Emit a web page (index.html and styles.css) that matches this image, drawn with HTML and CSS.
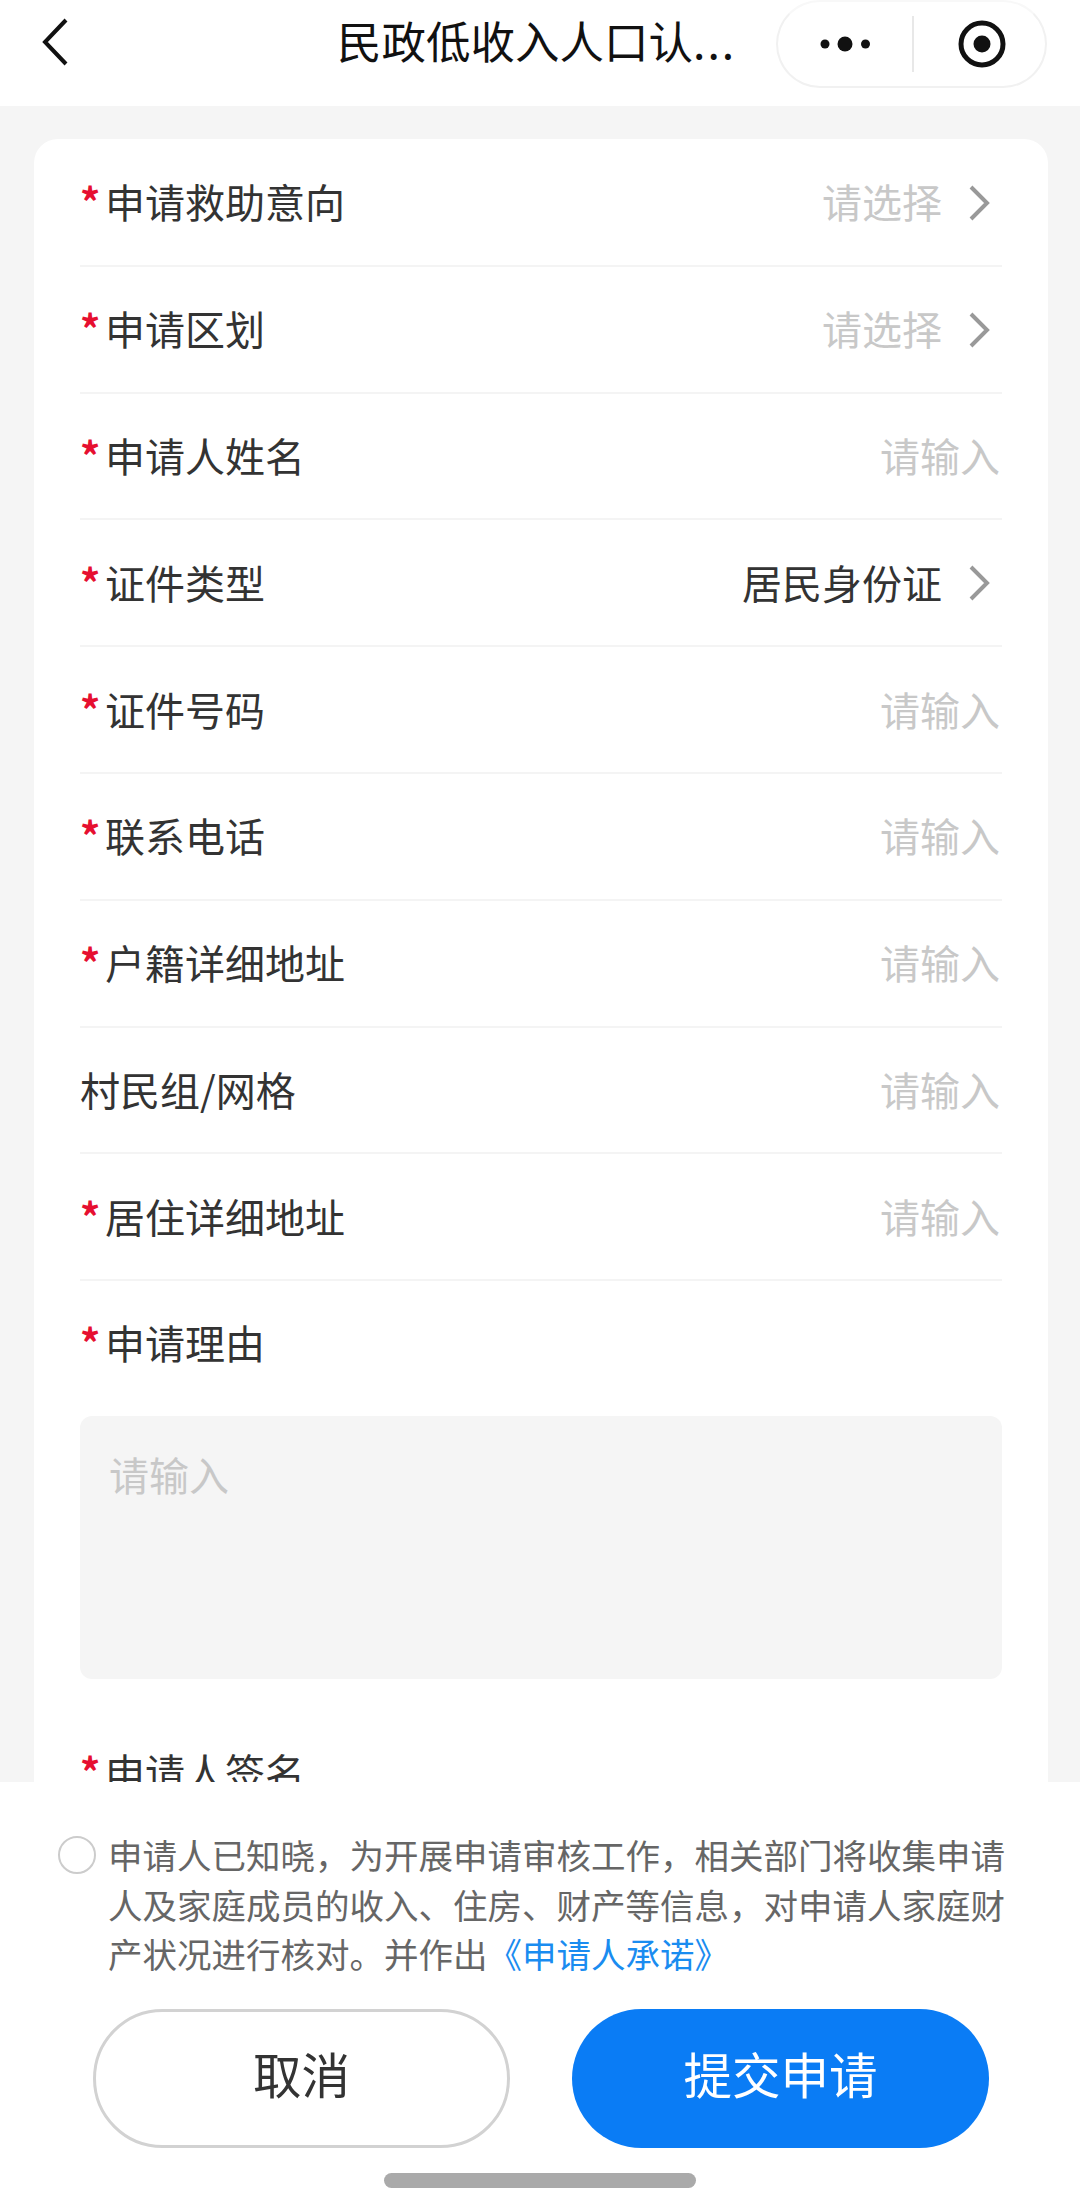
FILE: index.html
```html
<!DOCTYPE html>
<html lang="zh-CN">
<head>
    <meta charset="UTF-8">
    <meta name="viewport" content="width=device-width, initial-scale=1.0">
    <title>民政低收入人口认定申请</title>
    <link rel="stylesheet" href="styles.css">
</head>
<body>

<div class="page">
    <div class="nav">
        <svg class="nav-back" width="26" height="48" viewBox="0 0 26 48"><path d="M24 2 L3 24 L24 46" fill="none" stroke="#111" stroke-width="4"/></svg>
        <div class="nav-title">民政低收入人口认<span class="nav-dots">...</span></div>
        <div class="capsule">
            <svg class="capsule-more" width="54" height="16" viewBox="0 0 54 16"><circle cx="5" cy="8" r="4.500" fill="#111"/><circle cx="25" cy="8" r="7.500" fill="#111"/><circle cx="45.500" cy="8" r="4.500" fill="#111"/></svg>
            <div class="capsule-line"></div>
            <svg class="capsule-target" width="50" height="50" viewBox="0 0 50 50"><circle cx="25" cy="25" r="21" fill="none" stroke="#111" stroke-width="5"/><circle cx="25" cy="25" r="8.500" fill="#111"/></svg>
        </div>
    </div>

    <div class="content">
        <div class="card">
            <div class="row">
                <div class="label"><span class="star">*</span>申请救助意向</div>
                <div class="value placeholder">请选择</div>
                <svg class="arrow" width="24" height="36" viewBox="0 0 24 36"><path d="M4 2 L20 18 L4 34" fill="none" stroke="#999" stroke-width="4"/></svg>
            </div>
            <div class="row">
                <div class="label"><span class="star">*</span>申请区划</div>
                <div class="value placeholder">请选择</div>
                <svg class="arrow" width="24" height="36" viewBox="0 0 24 36"><path d="M4 2 L20 18 L4 34" fill="none" stroke="#999" stroke-width="4"/></svg>
            </div>
            <div class="row">
                <div class="label"><span class="star">*</span>申请人姓名</div>
                <div class="value placeholder">请输入</div>
            </div>
            <div class="row">
                <div class="label"><span class="star">*</span>证件类型</div>
                <div class="value">居民身份证</div>
                <svg class="arrow" width="24" height="36" viewBox="0 0 24 36"><path d="M4 2 L20 18 L4 34" fill="none" stroke="#999" stroke-width="4"/></svg>
            </div>
            <div class="row">
                <div class="label"><span class="star">*</span>证件号码</div>
                <div class="value placeholder">请输入</div>
            </div>
            <div class="row">
                <div class="label"><span class="star">*</span>联系电话</div>
                <div class="value placeholder">请输入</div>
            </div>
            <div class="row">
                <div class="label"><span class="star">*</span>户籍详细地址</div>
                <div class="value placeholder">请输入</div>
            </div>
            <div class="row">
                <div class="label">村民组/网格</div>
                <div class="value placeholder">请输入</div>
            </div>
            <div class="row">
                <div class="label"><span class="star">*</span>居住详细地址</div>
                <div class="value placeholder">请输入</div>
            </div>
            <div class="row row-plain">
                <div class="label"><span class="star">*</span>申请理由</div>
            </div>
            <div class="textarea placeholder">请输入</div>
            <div class="row row-sign">
                <div class="label"><span class="star">*</span>申请人签名</div>
            </div>
        </div>
    </div>

    <div class="footer">
        <div class="agree">
            <div class="radio"></div>
            <div class="agree-text">申请人已知晓，为开展申请审核工作，相关部门将收集申请人及家庭成员的收入、住房、财产等信息，对申请人家庭财产状况进行核对。并作出<span class="link">《申请人承诺》</span></div>
        </div>
        <div class="buttons">
            <div class="btn btn-cancel">取消</div>
            <div class="btn btn-submit">提交申请</div>
        </div>
        <div class="home-bar"></div>
    </div>
</div>

</body>
</html>
```

FILE: styles.css
```css
* {
    box-sizing: border-box;
}
body {
    margin: 0;
    font-family: "Noto Sans CJK SC", "Noto Sans", sans-serif;
    background-color: #f5f5f5;
}
.page {
    width: 1080px;
    height: 2202px;
    display: flex;
    flex-direction: column;
    overflow: hidden;
}
.nav {
    height: 106px;
    flex-shrink: 0;
    background: white;
    display: flex;
    align-items: flex-start;
    padding-left: 42px;
}
.nav-back {
    margin-top: 18px;
}
.nav-title {
    margin-left: 269px;
    width: 439px;
    font-size: 44.500px;
    line-height: 80px;
    color: #111;
    white-space: nowrap;
}
.nav-dots {
    letter-spacing: 2px;
}
.capsule {
    width: 271px;
    height: 88px;
    border: 2px solid #f1f1f1;
    border-top-color: #f8f8f8;
    border-radius: 44px;
    display: flex;
    align-items: center;
    padding-left: 42px;
}
.capsule-line {
    width: 2px;
    height: 56px;
    margin-left: 38px;
    background: #e8e8e8;
}
.capsule-target {
    margin-left: 43px;
}
.content {
    flex: 1;
    min-height: 0;
    overflow: hidden;
    padding: 33px 32px 0 34px;
}
.card {
    background: white;
    border-radius: 24px;
    padding: 1px 46px 40px;
}
.row {
    height: 126.800px;
    padding-bottom: 2px;
    display: flex;
    align-items: center;
    border-bottom: 2px solid #f4f4f4;
}
.row-plain {
    padding-bottom: 5px;
    border-bottom: none;
}
.row-sign {
    margin-top: 30px;
    border-bottom: none;
}
.label {
    flex: 1;
    font-size: 40px;
    color: #333;
    white-space: nowrap;
}
.star {
    display: inline-block;
    width: 25px;
    color: #e60f30;
    font-weight: 700;
}
.value {
    font-size: 40px;
    color: #333;
    margin-right: 2px;
}
.placeholder {
    color: #c8c8c8;
}
.arrow {
    margin-left: 23px;
    margin-right: 11px;
    margin-top: 3px;
}
.textarea {
    height: 263px;
    margin-top: 8px;
    background: #f5f5f5;
    border-radius: 12px;
    padding: 31px 29px;
    font-size: 40px;
    line-height: 54px;
}
.footer {
    height: 420px;
    flex-shrink: 0;
    position: relative;
    z-index: 1;
    background: white;
    padding-top: 48px;
}
.agree {
    display: flex;
    padding-left: 58px;
    padding-right: 70px;
}
.radio {
    width: 38px;
    height: 38px;
    flex-shrink: 0;
    margin-top: 6px;
    border: 2.500px solid #ccc;
    border-radius: 50%;
}
.agree-text {
    margin-left: 12px;
    font-size: 34.500px;
    line-height: 49.500px;
    color: #666;
}
.link {
    color: #1a8cf0;
}
.buttons {
    display: flex;
    padding-left: 93px;
    margin-top: 30px;
    gap: 62px;
}
.btn {
    width: 417px;
    height: 139px;
    padding-bottom: 11px;
    border-radius: 70px;
    display: flex;
    align-items: center;
    justify-content: center;
    font-size: 48.500px;
}
.btn-cancel {
    border: 3px solid #d2d2d2;
    color: #333;
}
.btn-submit {
    background: #0a7cf5;
    color: white;
}
.home-bar {
    width: 312px;
    height: 15px;
    margin: 25px auto 0;
    border-radius: 8px;
    background: #aaa;
}
```
